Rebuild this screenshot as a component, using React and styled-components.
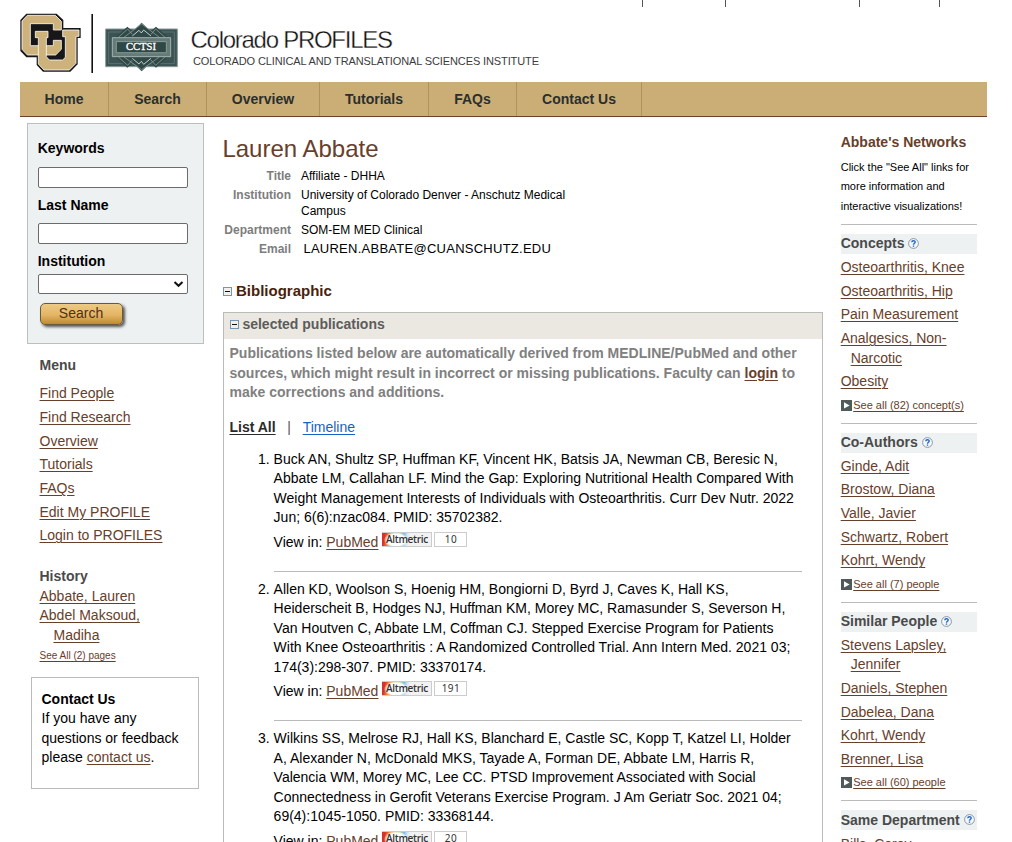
import React from 'react';
import styled, { createGlobalStyle } from 'styled-components';

const Global = createGlobalStyle`
  * { box-sizing: border-box; }
  html, body { margin: 0; height: 842px; overflow: hidden; background: #fff; }
  body { font: 14px/19.5px "Liberation Sans", Arial, sans-serif; color: #000; }
  a { color: #67402b; text-decoration: underline; text-underline-offset: 2px; text-decoration-thickness: 1px; }
`;

const Page = styled.div`
  width: 967px;
  margin-left: 20px;
  height: 842px;
  overflow: hidden;
  white-space: nowrap;
`;
const Header = styled.header`
  height: 82px;
  display: flex;
  justify-content: space-between;
  align-items: flex-start;
`;
const TopLinks = styled.div`
  display: flex;
  height: 7px;
  margin-right: 47px;
`;
const TopLink = styled.span`
  width: ${(p) => p.$w}px;
  border-left: 1px solid #555;
`;
const Nav = styled.nav`
  display: flex;
  height: 35px;
  background: #cbae76;
  border-bottom: 1px solid #6b402c;
`;
const NavItem = styled.span`
  width: ${(p) => p.$w}px;
  border-right: 1px solid #af935f;
  text-align: center;
  font-weight: bold;
  line-height: 35px;
  color: #2a2f2e;
`;
const Body = styled.div`
  display: flex;
  align-items: flex-start;
`;
const Left = styled.aside`
  width: 202.5px;
  padding-top: 6px;
`;
const SearchBox = styled.form`
  width: 177px;
  height: 221px;
  margin-left: 7px;
  padding: 14px 0 0 10px;
  background: #edf1f2;
  border: 1px solid #bbbfbf;
  display: flex;
  flex-direction: column;
  align-items: flex-start;
`;
const Label = styled.label`
  font-weight: bold;
  line-height: 20px;
  margin: 0 0 ${(p) => p.$mb}px -.3px;
`;
const Input = styled.input`
  width: 150px;
  height: 21px;
  margin: 0 0 7px;
  padding: 0;
  border: 1px solid #6b6b6b;
  border-radius: 2px;
  background: #fff;
`;
const Select = styled.div`
  width: 150px;
  height: 20px;
  border: 1px solid #6b6b6b;
  border-radius: 2px;
  background: #fff;
  display: flex;
  align-items: center;
  justify-content: flex-end;
  padding-right: 3px;
`;
const SearchButton = styled.button`
  width: 83px;
  height: 22px;
  margin: 9px 0 0 2px;
  padding: 0 1px 2px 0;
  border: 1px solid #6a5a3c;
  border-radius: 5px;
  background: linear-gradient(#edca86, #e4b563 55%, #c08a34);
  box-shadow: 2px 2px 3px #555;
  font: 14px/18px "Liberation Sans", Arial, sans-serif;
  color: #4f3019;
`;
const Menu = styled.div`
  padding: 11px 0 0 19.5px;
  display: flex;
  flex-direction: column;
  align-items: flex-start;
`;
const SideHeading = styled.h3`
  margin: ${(p) => p.$m || 0};
  font-size: 14px;
  line-height: 20px;
  color: #4a4a4a;
`;
const MenuLink = styled.a`line-height: 23.64px;`;
const HistoryLink = styled.a`
  padding-left: 14px;
  text-indent: -14px;
  line-height: 19.5px;
`;
const Continuation = styled.span`
  display: inline-block;
  text-indent: 0;
  text-decoration: underline;
`;
const TinyLink = styled.a`
  font-size: 10px;
  line-height: 20px;
  margin-top: 1px;
`;
const ContactBox = styled.div`
  width: 168px;
  height: 112px;
  margin: 11px 0 0 11px;
  padding: 11.5px 0 0 9.5px;
  border: 1px solid #bbb;
`;
const Main = styled.main`
  width: 600.5px;
  padding: 18px 0 0 .5px;
`;
const Name = styled.h1`
  margin: 0 0 5.5px -.6px;
  font-size: 24px;
  font-weight: normal;
  line-height: 27px;
  color: #67402b;
`;
const Detail = styled.div`
  display: flex;
  font-size: 12px;
  line-height: 16px;
  margin-bottom: 3.2px;
`;
const Term = styled.div`
  width: 68px;
  margin-right: 10px;
  text-align: right;
  font-weight: bold;
  color: #7d7d7d;
`;
const Email = styled.span`
  font-size: 13px;
  letter-spacing: .26px;
  padding-left: 2.4px;
`;
const GroupHeading = styled.h2`
  display: flex;
  align-items: center;
  gap: ${(p) => p.$gap}px;
  margin: ${(p) => p.$m};
  font-size: ${(p) => p.$size}px;
  line-height: 20px;
  color: ${(p) => p.$color};
`;
const Panel = styled.section`
  border: 1px solid #bbb;
  height: 600px;
`;
const PanelTop = styled.div`
  height: 26px;
  padding: 1px 0 0 6px;
  background: #ebe8e1;
`;
const Notice = styled.div`
  padding: 5px 0 0 5.5px;
  font-weight: bold;
  color: #808080;
`;
const Views = styled.div`
  display: flex;
  padding: 15px 0 0 5.5px;
  color: #555;
`;
const ViewLink = styled.a`
  color: ${(p) => (p.$on ? '#2a2a2a' : '#1a5fc4')};
  font-weight: ${(p) => (p.$on ? 'bold' : 'normal')};
`;
const Bar = styled.span`margin: 0 11.7px;`;
const Publications = styled.div`padding: 12.7px 0 0 49.6px;`;
const Publication = styled.article`
  width: 528.4px;
  margin-bottom: 8px;
  border-bottom: ${(p) => (p.$last ? 0 : 1)}px solid #bbb;
  display: grid;
  grid-template-columns: 0 1fr;
`;
const Num = styled.span`
  justify-self: end;
  padding-right: 4px;
`;
const ViewIn = styled.div`
  display: flex;
  align-items: flex-start;
  height: 42.9px;
  padding-top: 5.3px;
`;
const Altmetric = styled.span`
  display: inline-flex;
  margin-left: 4px;
  margin-top: -1px;
  gap: 2px;
  font: 10px/15px "Noto Sans", sans-serif;
  color: #333;
`;
const AltName = styled.span`
  width: 50px;
  height: 15px;
  padding-left: 3.5px;
  font-family: "Open Sans", sans-serif;
  font-weight: 600;
  font-size: 10px;
  letter-spacing: -.3px;
  line-height: 13.5px;
  border: 1px solid #ccc;
  border-left: 0;
  background:
    radial-gradient(ellipse 12px 8px at 14px 7px, #fff 75%, transparent 100%),
    linear-gradient(100deg, #d8322b 0 3px, #ef8a35 7px, #b5d66b 17px, #7fb8ea 22px, #cde4f4 25px, #f2f2f2 28px);
`;
const AltScore = styled.span`
  width: 33px;
  height: 15px;
  border: 1px solid #ccc;
  text-align: center;
  line-height: 13px;
  letter-spacing: .4px;
`;
const Right = styled.aside`
  width: 136px;
  margin-left: 17.7px;
  padding-top: 15px;
`;
const RightTitle = styled.h3`
  margin: 0 0 5.5px;
  font-size: 14px;
  line-height: 20px;
  color: #67402b;
`;
const Hint = styled.div`
  font-size: 11px;
  height: 66.5px;
`;
const Network = styled.section`
  border-top: 1px solid #bbb;
  padding: 9px 0 5.3px;
`;
const NetworkTitle = styled.h4`
  display: flex;
  align-items: center;
  gap: 4px;
  height: 20px;
  margin: 0 0 2.2px;
  font-size: 14px;
  background: #edf1f2;
  color: #4a4a4a;
`;
const NetworkLink = styled.a`
  display: block;
  padding: 2px 0 2px 10px;
  text-indent: -10px;
  line-height: 19.6px;
`;
const SeeAll = styled.div`
  display: flex;
  align-items: center;
  gap: 1.5px;
  height: 23.6px;
  font-size: 11px;
`;

const Lines = ({ lines }) => lines.map((l, i) => (
  <React.Fragment key={i}>{i > 0 && <br />}{l}</React.Fragment>
));

const Collapse = () => (
  <svg width="9" height="9" viewBox="0 0 9 9">
    <rect x=".5" y=".5" width="8" height="8" fill="#f2f0e9" stroke="#7396b5" />
    <path d="M2 4.5h5" stroke="#111" />
  </svg>
);
const Help = () => (
  <svg width="11" height="12" viewBox="0 0 11 12">
    <circle cx="5.5" cy="5.5" r="4.9" fill="#f4f8fc" stroke="#8a97a3" />
    <path d="M3.8 4.2C3.8 2.2 7.2 2.2 7.2 4.1C7.2 5.3 5.5 5.2 5.5 6.7M5.5 7.5v1.3" fill="none" stroke="#2463c4" strokeWidth="1.4" />
  </svg>
);
const Arrow = () => (
  <svg width="11" height="12" viewBox="0 0 11 12">
    <rect width="11" height="11" fill="#515a5a" />
    <path d="M3 2.3L8.6 5.4L3 8.4z" fill="#fff" />
  </svg>
);

const Logo = () => (
  <svg width="530" height="78" viewBox="20 0 530 78">
    <g transform="translate(18 11) scale(.33333)">
      <path d="M25 8H116L136 27V51H188V81H179V160L157 182H75L56 162V139H25L7 120V27Z" fill="#17171a" />
      <path d="M28 13H112L130 31V57H106V38H37V104H106V88H130V115L113 132H28L12 115V30Z" fill="#cdb27b" stroke="#fff" strokeWidth="2.4" />
      <path d="M52 61H90V80H85V137L94 147H134L142 139V77H134V57H183V76H174V157L154 177H78L61 159V80H52Z" fill="#cdb27b" stroke="#fff" strokeWidth="2.4" />
    </g>
    <path d="M92.2 14V73" stroke="#111" strokeWidth="1.6" />
    <g transform="scale(.33333)">
      <path d="M317 87H532V200H317Z" fill="#3b5453" stroke="#8a9c9a" strokeWidth="3" />
      <path d="M326 96H523V191H326Z" fill="none" stroke="#6b817e" strokeWidth="2" />
      <path d="M346 112L382 80L398 94L425 68L452 94L468 80L504 112V170L468 203L452 188L425 214L398 188L382 203L346 170Z" fill="#304947" />
      <path d="M355 112L383 87L397 103M372 112L425 72L478 112M453 103L467 87L495 112M355 171L383 196L397 180M372 171L425 209L478 171M453 180L467 196L495 171" fill="none" stroke="#93a5a2" strokeWidth="2.2" />
      <path d="M397 108L417 91L424 99L431 90L453 108M397 175L417 192L424 184L431 193L453 175" fill="none" stroke="#dde5e3" strokeWidth="2.5" />
      <path d="M337 113H512V170H337Z" fill="#647b78" stroke="#b3c0be" strokeWidth="2.5" />
      <path d="M349 125H499V158H349Z" fill="#2f4846" stroke="#a5b5b2" strokeWidth="2" />
      <text x="378" y="151" textLength="90" lengthAdjust="spacingAndGlyphs" fontFamily="Liberation Serif, serif" fontSize="28" fill="#fff" stroke="#fff" strokeWidth=".9">CCTSI</text>
    </g>
    <text x="190.5" y="48" textLength="202.5" fontSize="24" fill="#151515" stroke="#fff" strokeWidth=".3">Colorado PROFILES</text>
    <text x="193" y="65" textLength="346" fontSize="11" fill="#3c3c3c">COLORADO CLINICAL AND TRANSLATIONAL SCIENCES INSTITUTE</text>
  </svg>
);

const nav = [['Home', 89], ['Search', 98], ['Overview', 113], ['Tutorials', 109], ['FAQs', 88], ['Contact Us', 125]];
const menu = ['Find People', 'Find Research', 'Overview', 'Tutorials', 'FAQs', 'Edit My PROFILE', 'Login to PROFILES'];
const details = [
  ['Title', ['Affiliate - DHHA']],
  ['Institution', ['University of Colorado Denver - Anschutz Medical', 'Campus']],
  ['Department', ['SOM-EM MED Clinical']],
];
const pubs = [
  [['Buck AN, Shultz SP, Huffman KF, Vincent HK, Batsis JA, Newman CB, Beresic N,', 'Abbate LM, Callahan LF. Mind the Gap: Exploring Nutritional Health Compared With', 'Weight Management Interests of Individuals with Osteoarthritis. Curr Dev Nutr. 2022', 'Jun; 6(6):nzac084. PMID: 35702382.'], 10],
  [['Allen KD, Woolson S, Hoenig HM, Bongiorni D, Byrd J, Caves K, Hall KS,', 'Heiderscheit B, Hodges NJ, Huffman KM, Morey MC, Ramasunder S, Severson H,', 'Van Houtven C, Abbate LM, Coffman CJ. Stepped Exercise Program for Patients', 'With Knee Osteoarthritis : A Randomized Controlled Trial. Ann Intern Med. 2021 03;', '174(3):298-307. PMID: 33370174.'], 191],
  [['Wilkins SS, Melrose RJ, Hall KS, Blanchard E, Castle SC, Kopp T, Katzel LI, Holder', 'A, Alexander N, McDonald MKS, Tayade A, Forman DE, Abbate LM, Harris R,', 'Valencia WM, Morey MC, Lee CC. PTSD Improvement Associated with Social', 'Connectedness in Gerofit Veterans Exercise Program. J Am Geriatr Soc. 2021 04;', '69(4):1045-1050. PMID: 33368144.'], 20],
];
const networks = [
  ['Concepts', [['Osteoarthritis, Knee'], ['Osteoarthritis, Hip'], ['Pain Measurement'], ['Analgesics, Non-', 'Narcotic'], ['Obesity']], 'See all (82) concept(s)'],
  ['Co-Authors', [['Ginde, Adit'], ['Brostow, Diana'], ['Valle, Javier'], ['Schwartz, Robert'], ['Kohrt, Wendy']], 'See all (7) people'],
  ['Similar People', [['Stevens Lapsley,', 'Jennifer'], ['Daniels, Stephen'], ['Dabelea, Dana'], ['Kohrt, Wendy'], ['Brenner, Lisa']], 'See all (60) people'],
  ['Same Department', [['Bills, Corey']], null],
];

export default function App() {
  return (
    <Page>
      <Global />
      <Header>
        <Logo />
        <TopLinks>{[83, 134, 80, 1].map((w) => <TopLink key={w} $w={w} />)}</TopLinks>
      </Header>
      <Nav>{nav.map(([t, w]) => <NavItem key={t} $w={w}>{t}</NavItem>)}</Nav>
      <Body>
        <Left>
          <SearchBox>
            <Label $mb={9}>Keywords</Label>
            <Input />
            <Label $mb={8}>Last Name</Label>
            <Input />
            <Label $mb={3}>Institution</Label>
            <Select>
              <svg width="11" height="8" viewBox="0 0 11 8"><path d="M1.5 2L5.5 5.8L9.5 2" fill="none" stroke="#111" strokeWidth="2" /></svg>
            </Select>
            <SearchButton type="button">Search</SearchButton>
          </SearchBox>
          <Menu>
            <SideHeading $m="0 0 7.3px">Menu</SideHeading>
            {menu.map((m) => <MenuLink key={m} href="#">{m}</MenuLink>)}
            <SideHeading $m="18px 0 1px">History</SideHeading>
            <HistoryLink href="#">Abbate, Lauren</HistoryLink>
            <HistoryLink href="#">Abdel Maksoud,<br /><Continuation>Madiha</Continuation></HistoryLink>
            <TinyLink href="#">See All (2) pages</TinyLink>
          </Menu>
          <ContactBox>
            <b>Contact Us</b><br />If you have any<br />questions or feedback<br />please <a href="#">contact us</a>.
          </ContactBox>
        </Left>
        <Main>
          <Name>Lauren Abbate</Name>
          {details.map(([k, v]) => <Detail key={k}><Term>{k}</Term><div><Lines lines={v} /></div></Detail>)}
          <Detail><Term>Email</Term><Email>LAUREN.ABBATE@CUANSCHUTZ.EDU</Email></Detail>
          <GroupHeading $m="24px 0 11px" $gap={4} $size={15} $color="#4a1f0c"><Collapse />Bibliographic</GroupHeading>
          <Panel>
            <PanelTop>
              <GroupHeading $m="0" $gap={3.4} $size={14} $color="#5c5c5c"><Collapse />selected publications</GroupHeading>
            </PanelTop>
            <Notice>
              Publications listed below are automatically derived from MEDLINE/PubMed and other<br />
              sources, which might result in incorrect or missing publications. Faculty can <a href="#">login</a> to<br />
              make corrections and additions.
            </Notice>
            <Views><ViewLink $on href="#">List All</ViewLink><Bar>|</Bar><ViewLink href="#">Timeline</ViewLink></Views>
            <Publications>
              {pubs.map(([lines, score], i) => (
                <Publication key={score} $last={i === 2}>
                  <Num>{i + 1}.</Num>
                  <div>
                    <Lines lines={lines} />
                    <ViewIn>View in:&nbsp;<a href="#">PubMed</a><Altmetric><AltName>Altmetric</AltName><AltScore>{score}</AltScore></Altmetric></ViewIn>
                  </div>
                </Publication>
              ))}
            </Publications>
          </Panel>
        </Main>
        <Right>
          <RightTitle>Abbate's Networks</RightTitle>
          <Hint>Click the "See All" links for<br />more information and<br />interactive visualizations!</Hint>
          {networks.map(([title, links, all]) => (
            <Network key={title}>
              <NetworkTitle>{title}<Help /></NetworkTitle>
              {links.map((l) => <NetworkLink key={l[0]} href="#"><Lines lines={l} /></NetworkLink>)}
              {all && <SeeAll><Arrow /><a href="#">{all}</a></SeeAll>}
            </Network>
          ))}
        </Right>
      </Body>
    </Page>
  );
}
